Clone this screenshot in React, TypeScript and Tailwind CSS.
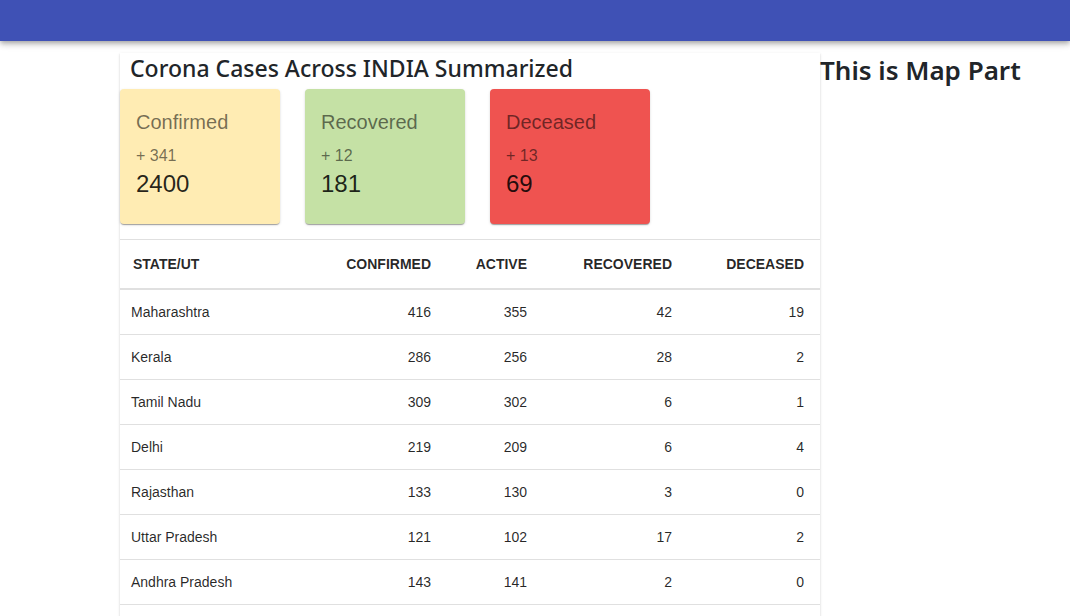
import React from 'react';

type StateRow = {
  name: string;
  confirmed: number;
  active: number;
  recovered: number;
  deceased: number;
};

const rows: StateRow[] = [
  { name: 'Maharashtra', confirmed: 416, active: 355, recovered: 42, deceased: 19 },
  { name: 'Kerala', confirmed: 286, active: 256, recovered: 28, deceased: 2 },
  { name: 'Tamil Nadu', confirmed: 309, active: 302, recovered: 6, deceased: 1 },
  { name: 'Delhi', confirmed: 219, active: 209, recovered: 6, deceased: 4 },
  { name: 'Rajasthan', confirmed: 133, active: 130, recovered: 3, deceased: 0 },
  { name: 'Uttar Pradesh', confirmed: 121, active: 102, recovered: 17, deceased: 2 },
  { name: 'Andhra Pradesh', confirmed: 143, active: 141, recovered: 2, deceased: 0 },
];

const cards = [
  { title: 'Confirmed', delta: 341, total: 2400, bg: 'bg-[#ffecb3]' },
  { title: 'Recovered', delta: 12, total: 181, bg: 'bg-[#c5e1a5]' },
  { title: 'Deceased', delta: 13, total: 69, bg: 'bg-[#ef5350]' },
];

const paperShadow =
  'shadow-[0px_2px_1px_-1px_rgba(0,0,0,0.2),0px_1px_1px_0px_rgba(0,0,0,0.14),0px_1px_3px_0px_rgba(0,0,0,0.12)]';

const cols = 'grid grid-cols-[210px_117px_96px_145px_132px]';

const StatCard: React.FC<{ title: string; delta: number; total: number; bg: string }> = ({ title, delta, total, bg }) => (
  <div className={`w-[160px] h-[135px] rounded ${bg} ${paperShadow} px-4 pt-[18px]`}>
    <div className="text-[20px] leading-[30px] text-black/55 mb-[7px]">{title}</div>
    <div className="text-[16px] leading-[24px] text-black/55">+ {delta}</div>
    <div className="text-[24px] leading-[32px] text-black/85">{total}</div>
  </div>
);

const App: React.FC = () => {
  return (
    <div className="min-h-screen bg-white font-['Liberation_Sans',Arial,sans-serif]">
      <header className="h-[41px] bg-[#3f51b5] shadow-[0px_2px_4px_-1px_rgba(0,0,0,0.2),0px_4px_5px_0px_rgba(0,0,0,0.14),0px_1px_10px_0px_rgba(0,0,0,0.12)] relative z-10" />

      <div className="flex pt-[12px]">
        <div className="w-[120px] shrink-0" />

        <main className={`w-[700px] shrink-0 bg-white ${paperShadow}`}>
          <section className="pb-[15px]">
            <h1 className="pl-[10px] h-[30px] leading-[30px] mb-[6px] text-[23px] font-medium text-[#212529] font-['Noto_Sans',sans-serif]">
              Corona Cases Across INDIA Summarized
            </h1>
            <div className="flex gap-[25px]">
              {cards.map(c => (
                <StatCard key={c.title} {...c} />
              ))}
            </div>
          </section>

          <div className="border-t border-[#e0e0e0] text-[14px] text-black/85">
            <div className={`${cols} h-[50px] items-center border-b-2 border-[#e0e0e0] font-bold`}>
              <div className="pl-[13px]">STATE/UT</div>
              <div className="text-right pr-4">CONFIRMED</div>
              <div className="text-right pr-4">ACTIVE</div>
              <div className="text-right pr-4">RECOVERED</div>
              <div className="text-right pr-4">DECEASED</div>
            </div>
            {rows.map(r => (
              <div key={r.name} className={`${cols} h-[45px] items-center border-b border-[#e0e0e0]`}>
                <div className="pl-[11px]">{r.name}</div>
                <div className="text-right pr-4">{r.confirmed}</div>
                <div className="text-right pr-4">{r.active}</div>
                <div className="text-right pr-4">{r.recovered}</div>
                <div className="text-right pr-4">{r.deceased}</div>
              </div>
            ))}
            <div className="h-[45px]" />
          </div>
        </main>

        <aside className="flex-1">
          <h3 className="text-[26px] leading-[34px] font-semibold text-[#212529] font-['Noto_Sans',sans-serif]">
            This is Map Part
          </h3>
        </aside>
      </div>
    </div>
  );
};

export default App;
